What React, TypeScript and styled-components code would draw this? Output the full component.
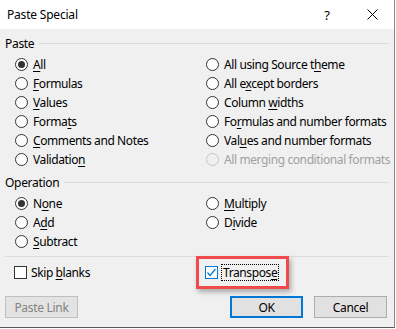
import React from "react";
import styled, { createGlobalStyle } from "styled-components";

const Global = createGlobalStyle`
  html, body { margin: 0; padding: 0; background: #ffffff; }
  body { font-family: "Noto Sans", "Open Sans", Arial, sans-serif; font-size: 12px; color: #000; }
`;

const Dialog = styled.div`
  width: 394px;
  height: 327px;
  border-right: 1px solid #8a8a8a;
  border-bottom: 1px solid #5a5a5a;
  background: #f0f0f0;
  display: flex;
  flex-direction: column;
`;

const TitleBar = styled.div`
  height: 29px;
  background: #ffffff;
  display: flex;
  align-items: center;
  padding-left: 7px;
  flex-shrink: 0;
`;

const Title = styled.div`
  flex: 1;
  font-size: 12px;
  letter-spacing: -0.2px;
`;

const Help = styled.div`
  width: 20px;
  text-align: center;
  font-size: 13px;
  margin-right: 12px;
`;

const Close = styled.div`
  width: 46px;
  display: flex;
  align-items: center;
  justify-content: center;
  margin-right: -1px;
`;

const Body = styled.div`
  padding: 5px 5px 0 5px;
  display: flex;
  flex-direction: column;
  flex: 1;
`;

const GroupHeader = styled.div<{ $mt?: number }>`
  height: 18px;
  display: flex;
  align-items: center;
  gap: 5px;
  letter-spacing: -0.3px;
  margin-top: ${(p) => p.$mt ?? 0}px;
  &::after {
    content: "";
    flex: 1;
    height: 1px;
    background: #dcdcdc;
  }
`;

const OptionGrid = styled.div<{ $rows: number }>`
  display: grid;
  grid-template-columns: 191px 1fr;
  grid-template-rows: repeat(${(p) => p.$rows}, 19px);
  grid-auto-flow: column;
  padding-left: 10px;
  margin-top: 3px;
`;

const Option = styled.div<{ $disabled?: boolean }>`
  display: flex;
  align-items: center;
  gap: 5px;
  white-space: nowrap;
  color: ${(p) => (p.$disabled ? "#a0a0a0" : "#000")};
  letter-spacing: -0.4px;
`;

const RadioCircle = styled.span<{ $checked?: boolean; $disabled?: boolean }>`
  width: 13px;
  height: 13px;
  box-sizing: border-box;
  border-radius: 50%;
  border: 1px solid ${(p) => (p.$disabled ? "#c6c6c6" : "#333333")};
  background: ${(p) => (p.$disabled ? "#f0f0f0" : "#ffffff")};
  display: flex;
  align-items: center;
  justify-content: center;
  flex-shrink: 0;
  &::after {
    content: "";
    width: 7px;
    height: 7px;
    border-radius: 50%;
    background: #333333;
    display: ${(p) => (p.$checked ? "block" : "none")};
  }
`;

const Mn = styled.span`
  text-decoration: underline;
  text-underline-offset: 2px;
`;

const Separator = styled.div`
  height: 1px;
  background: #dcdcdc;
  margin-top: 5px;
`;

const CheckRow = styled.div`
  display: grid;
  grid-template-columns: 191px 1fr;
  height: 19px;
  margin-top: 6px;
  padding-left: 9px;
`;

const CheckItem = styled.div`
  display: flex;
  align-items: center;
  gap: 4px;
  position: relative;
  letter-spacing: -0.4px;
`;

const Box = styled.span<{ $checked?: boolean }>`
  width: 13px;
  height: 13px;
  box-sizing: border-box;
  border: 1px solid ${(p) => (p.$checked ? "#0078d7" : "#333333")};
  background: #ffffff;
  display: flex;
  align-items: center;
  justify-content: center;
  flex-shrink: 0;
`;

const FocusText = styled.span`
  outline: 1px dotted #000;
  outline-offset: 0px;
  padding: 0 1px;
  line-height: 15px;
`;

const Highlight = styled.div`
  position: absolute;
  left: -9px;
  top: -7px;
  width: 93px;
  height: 33px;
  box-sizing: border-box;
  border: 3px solid #f04a4a;
  box-shadow: 2px 3px 5px rgba(0, 0, 0, 0.3);
  pointer-events: none;
`;

const ButtonRow = styled.div`
  display: flex;
  align-items: center;
  margin-top: 14px;
  padding-right: 2px;
`;

const Button = styled.div<{ $variant?: "default" | "primary" | "disabled" }>`
  width: 73px;
  height: 22px;
  box-sizing: border-box;
  display: flex;
  align-items: center;
  justify-content: center;
  background: ${(p) => (p.$variant === "disabled" ? "#e3e3e3" : "#e1e1e1")};
  border: ${(p) =>
    p.$variant === "primary"
      ? "2px solid #0078d7"
      : p.$variant === "disabled"
      ? "1px solid #bfbfbf"
      : "1px solid #adadad"};
  color: ${(p) => (p.$variant === "disabled" ? "#838383" : "#000")};
  letter-spacing: -0.3px;
`;

const Spacer = styled.div`
  flex: 1;
`;

const ButtonGap = styled.div`
  width: 11px;
`;

type Opt = { pre: string; mn: string; post: string; checked?: boolean; disabled?: boolean };

const pasteOpts: Opt[] = [
  { pre: "", mn: "A", post: "ll", checked: true },
  { pre: "", mn: "F", post: "ormulas" },
  { pre: "", mn: "V", post: "alues" },
  { pre: "Forma", mn: "t", post: "s" },
  { pre: "", mn: "C", post: "omments and Notes" },
  { pre: "Validatio", mn: "n", post: "" },
  { pre: "All using Source t", mn: "h", post: "eme" },
  { pre: "All e", mn: "x", post: "cept borders" },
  { pre: "Column ", mn: "w", post: "idths" },
  { pre: "Fo", mn: "r", post: "mulas and number formats" },
  { pre: "Val", mn: "u", post: "es and number formats" },
  { pre: "All merging conditional formats", mn: "", post: "", disabled: true },
];

const opOpts: Opt[] = [
  { pre: "N", mn: "o", post: "ne", checked: true },
  { pre: "A", mn: "d", post: "d" },
  { pre: "", mn: "S", post: "ubtract" },
  { pre: "", mn: "M", post: "ultiply" },
  { pre: "D", mn: "i", post: "vide" },
];

const Radio = ({ o }: { o: Opt }) => (
  <Option $disabled={o.disabled}>
    <RadioCircle $checked={o.checked} $disabled={o.disabled} />
    <span>
      {o.pre}
      {o.mn && <Mn>{o.mn}</Mn>}
      {o.post}
    </span>
  </Option>
);

export default function App() {
  return (
    <>
      <Global />
      <Dialog>
        <TitleBar>
          <Title>Paste Special</Title>
          <Help>?</Help>
          <Close>
            <svg width="11" height="11" viewBox="0 0 11 11">
              <path d="M0.5 0.5 L10.5 10.5 M10.5 0.5 L0.5 10.5" stroke="#000" strokeWidth="1" fill="none" />
            </svg>
          </Close>
        </TitleBar>
        <Body>
          <GroupHeader>Paste</GroupHeader>
          <OptionGrid $rows={6}>
            {pasteOpts.map((o, i) => (
              <Radio key={i} o={o} />
            ))}
          </OptionGrid>
          <GroupHeader $mt={4}>Operation</GroupHeader>
          <OptionGrid $rows={3}>
            {opOpts.map((o, i) => (
              <Radio key={i} o={o} />
            ))}
          </OptionGrid>
          <Separator />
          <CheckRow>
            <CheckItem>
              <Box />
              <span>
                Skip <Mn>b</Mn>lanks
              </span>
            </CheckItem>
            <CheckItem>
              <Box $checked>
                <svg width="11" height="11" viewBox="0 0 11 11">
                  <path d="M1.5 5.5 L4 8.5 L9.5 2" stroke="#0078d7" strokeWidth="1.2" fill="none" />
                </svg>
              </Box>
              <FocusText>
                Transpos<Mn>e</Mn>
              </FocusText>
              <Highlight />
            </CheckItem>
          </CheckRow>
          <ButtonRow>
            <Button $variant="disabled">Paste Link</Button>
            <Spacer />
            <Button $variant="primary">OK</Button>
            <ButtonGap />
            <Button>Cancel</Button>
          </ButtonRow>
        </Body>
      </Dialog>
    </>
  );
}
